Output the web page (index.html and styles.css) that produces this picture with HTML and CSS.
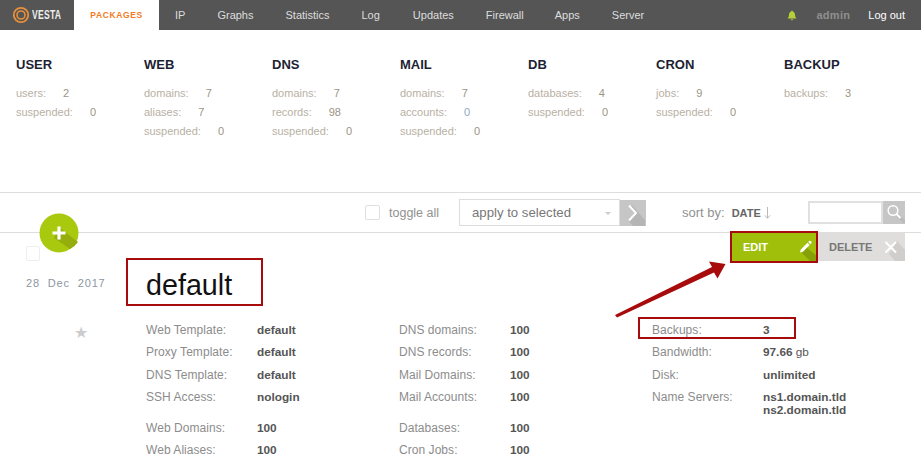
FILE: index.html
```html
<!DOCTYPE html>
<html lang="en">
<head>
<meta charset="utf-8">
<title>Packages</title>
<link rel="stylesheet" href="styles.css">
</head>
<body>
<nav class="nav">
  <div class="logo">
    <svg width="18" height="18" viewBox="0 0 18 18"><circle cx="9" cy="9" r="7.2" fill="none" stroke="#e8903a" stroke-width="1.8"/><circle cx="9" cy="9" r="4" fill="none" stroke="#e8903a" stroke-width="1.6"/></svg>
    <span class="logo-text">VESTA</span>
  </div>
  <a class="tab active">PACKAGES</a>
  <a class="item i-ip">IP</a>
  <a class="item i-graphs">Graphs</a>
  <a class="item i-stats">Statistics</a>
  <a class="item i-log">Log</a>
  <a class="item i-updates">Updates</a>
  <a class="item i-firewall">Firewall</a>
  <a class="item i-apps">Apps</a>
  <a class="item i-server">Server</a>
  <div class="nav-right">
    <svg class="bell" width="10" height="11" viewBox="0 0 10 11"><path d="M5 0.5c.5 0 .8.4.8.9C7.300 1.800 8 3 8 4.600c0 2 .5 3 1.500 3.900H.5C1.500 7.600 2 6.600 2 4.600 2 3 2.700 1.800 4.200 1.400c0-.5.3-.9.800-.9zM3.800 9.300h2.400C6.100 10 5.600 10.500 5 10.500S3.900 10 3.800 9.300z" fill="#b3cf3a"/></svg>
    <span class="user">admin</span>
    <a class="logout">Log out</a>
  </div>
</nav>

<section class="stats">
  <div class="stat">
    <h3>USER</h3>
    <p><span>users:</span><b>2</b></p>
    <p><span>suspended:</span><b>0</b></p>
  </div>
  <div class="stat">
    <h3>WEB</h3>
    <p><span>domains:</span><b>7</b></p>
    <p><span>aliases:</span><b>7</b></p>
    <p><span>suspended:</span><b>0</b></p>
  </div>
  <div class="stat">
    <h3>DNS</h3>
    <p><span>domains:</span><b>7</b></p>
    <p><span>records:</span><b>98</b></p>
    <p><span>suspended:</span><b>0</b></p>
  </div>
  <div class="stat">
    <h3>MAIL</h3>
    <p><span>domains:</span><b>7</b></p>
    <p><span>accounts:</span><b class="blue">0</b></p>
    <p><span>suspended:</span><b>0</b></p>
  </div>
  <div class="stat">
    <h3>DB</h3>
    <p><span>databases:</span><b>4</b></p>
    <p><span>suspended:</span><b>0</b></p>
  </div>
  <div class="stat">
    <h3>CRON</h3>
    <p><span>jobs:</span><b>9</b></p>
    <p><span>suspended:</span><b>0</b></p>
  </div>
  <div class="stat">
    <h3>BACKUP</h3>
    <p><span>backups:</span><b>3</b></p>
  </div>
</section>

<section class="toolbar">
  <span class="checkbox"></span>
  <span class="toggle">toggle all</span>
  <div class="select">apply to selected<i class="caret"></i></div>
  <div class="apply">
    <svg width="26" height="26" viewBox="0 0 26 26"><path d="M13 26 8 20 15 13 9 6h4l12 14v6z" fill="#b5b5b5"/><path d="M9 5.500 16 13 9 20.500" fill="none" stroke="#fff" stroke-width="2"/></svg>
  </div>
  <span class="sort">sort by:</span>
  <b class="sort-val">DATE</b>
  <svg class="sort-arrow" width="7" height="12" viewBox="0 0 7 12"><path d="M3.500 0v11M.8 8.300l2.700 3 2.700-3" fill="none" stroke="#bbb" stroke-width="1"/></svg>
  <div class="search"><div class="search-input"></div>
    <div class="search-btn"><svg width="22" height="22" viewBox="0 0 22 22"><path d="M13 15l7 7h2v-3l-7-7z" fill="#bbb"/><circle cx="10" cy="9.500" r="4.800" fill="none" stroke="#fff" stroke-width="1.500"/><path d="M13.500 13l4 4" stroke="#fff" stroke-width="2"/></svg></div>
  </div>
</section>

<a class="add">
  <svg width="40" height="40" viewBox="0 0 40 40"><circle cx="20" cy="20" r="19.500" fill="#a9c90f"/><path d="M21 15l18 14a19.500 19.500 0 0 1-8 7L15 25z" fill="#96ae0c"/><path d="M20 13.500v13M13.500 20h13" stroke="#fff" stroke-width="3.200"/></svg>
</a>

<section class="row">
  <div class="actions">
    <a class="btn edit">EDIT
      <svg width="24" height="28" viewBox="0 0 24 28"><path d="M8 20l4-6 12 10v4H16z" fill="#86a008"/><path d="M6 19.500l.8-3L13.500 9.800l2.200 2.200-6.700 6.700zM14.200 9l1-1a1 1 0 0 1 1.400 0l.8.800a1 1 0 0 1 0 1.400l-1 1z" fill="#fff"/></svg>
    </a>
    <a class="btn del">DELETE
      <svg width="26" height="28" viewBox="0 0 26 28"><path d="M10 21l8-13 8 9v11H16z" fill="#cfcecc"/><path d="M6.500 9 17 19.500M17 9 6.500 19.500" stroke="#fff" stroke-width="2"/></svg>
    </a>
  </div>
  <div class="body">
    <div class="side">
      <span class="small-check"></span>
      <div class="date"><span>28</span><span>Dec</span><span>2017</span></div>
      <div class="star">★</div>
    </div>
    <div class="content">
      <h1 class="name">default</h1>
      <div class="cols">
        <div class="col">
          <p><span>Web Template:</span><b>default</b></p>
          <p><span>Proxy Template:</span><b>default</b></p>
          <p><span>DNS Template:</span><b>default</b></p>
          <p class="gap"><span>SSH Access:</span><b>nologin</b></p>
          <p><span>Web Domains:</span><b>100</b></p>
          <p><span>Web Aliases:</span><b>100</b></p>
        </div>
        <div class="col">
          <p><span>DNS domains:</span><b>100</b></p>
          <p><span>DNS records:</span><b>100</b></p>
          <p><span>Mail Domains:</span><b>100</b></p>
          <p class="gap"><span>Mail Accounts:</span><b>100</b></p>
          <p><span>Databases:</span><b>100</b></p>
          <p><span>Cron Jobs:</span><b>100</b></p>
        </div>
        <div class="col">
          <p><span>Backups:</span><b>3</b></p>
          <p><span>Bandwidth:</span><b>97.66 <em>gb</em></b></p>
          <p><span>Disk:</span><b>unlimited</b></p>
          <p class="ns"><span>Name Servers:</span><b>ns1.domain.tld<br>ns2.domain.tld</b></p>
        </div>
      </div>
    </div>
  </div>
</section>

<div class="mark mark-edit"></div>
<div class="mark mark-name"></div>
<div class="mark mark-backups"></div>
<svg class="arrow" width="122" height="62" viewBox="0 0 122 62"><path d="M1 57 3 59.500 100 14.500 103.500 20.500 111.500 6 95 3.500 98 9z" fill="#a80b0b"/></svg>
</body>
</html>
```
FILE: styles.css
```css
* { box-sizing: border-box; }
html, body { margin: 0; padding: 0; }
body {
  width: 921px;
  height: 463px;
  overflow: hidden;
  background: #fff;
  position: relative;
  font-family: "Liberation Sans", Arial, sans-serif;
  font-size: 12px;
  color: #555;
}
p, h1, h3 { margin: 0; font-weight: normal; }

.nav {
  display: flex;
  align-items: center;
  height: 30px;
  background: #555;
  color: #ddd;
  font-size: 11px;
}
.logo { width: 74px; display: flex; align-items: center; padding-left: 12px; gap: 2px; }
.logo-text {
  color: #eee;
  font-weight: bold;
  font-size: 12px;
  display: inline-block;
  transform: scaleX(.72);
  transform-origin: left center;
  letter-spacing: .3px;
}
.tab {
  width: 85px;
  height: 30px;
  background: #fff;
  color: #f57a1f;
  font-weight: bold;
  font-size: 8.500px;
  letter-spacing: .6px;
  line-height: 30px;
  text-align: center;
}
.item { white-space: nowrap; }
.i-ip { margin-left: 16px; }
.i-graphs { margin-left: 32px; }
.i-stats { margin-left: 32px; }
.i-log { margin-left: 32px; }
.i-updates { margin-left: 33px; }
.i-firewall { margin-left: 32px; }
.i-apps { margin-left: 31px; }
.i-server { margin-left: 32px; }
.nav-right { margin-left: auto; display: flex; align-items: center; padding-right: 16px; }
.bell { margin-right: 19px; }
.user { color: #8f8f8f; font-weight: bold; font-size: 11px; letter-spacing: .3px; margin-right: 18px; }
.logout { color: #fff; }

.stats {
  display: grid;
  grid-template-columns: repeat(7, 128px);
  padding: 27px 0 0 16px;
  border-bottom: 1px solid #ddd;
  height: 163px;
}
.stat h3 { font-size: 13px; font-weight: bold; color: #1d1f33; line-height: 15px; margin-bottom: 12px; }
.stat p { height: 19px; line-height: 19px; color: #b8b0a4; font-size: 11px; white-space: nowrap; }
.stat b { font-weight: normal; margin-left: 17px; color: #9b9484; }
.stat b.blue { color: #8fa6c4; }

.toolbar {
  position: relative;
  height: 40px;
  border-bottom: 1px solid #ddd;
  display: flex;
  align-items: center;
  padding-left: 365px;
}
.checkbox { width: 15px; height: 15px; border: 1px solid #e0e0e0; border-radius: 2px; }
.toggle { margin-left: 9px; color: #90918f; font-size: 12.500px; width: 70px; }
.select {
  width: 161px;
  height: 27px;
  border: 1px solid #ddd;
  line-height: 25px;
  padding-left: 12px;
  color: #777;
  font-size: 13.200px;
  position: relative;
}
.caret {
  position: absolute;
  right: 8px;
  top: 12px;
  border: 3px solid transparent;
  border-top-color: #ccc;
}
.apply { width: 26px; height: 26px; background: #c6c6c6; margin-left: 0; display: flex; }
.sort { margin-left: 36px; color: #90918f; font-size: 13px; }
.sort-val { margin-left: 7px; font-size: 11px; color: #666; }
.sort-arrow { margin-left: 3px; }
.search { display: flex; margin-left: 37px; height: 23px; }
.search-input { width: 75px; height: 23px; border: 2px solid #e0e0e0; }
.search-btn { width: 22px; height: 23px; background: #c6c6c6; }

.add { position: absolute; left: 39px; top: 213px; width: 40px; height: 40px; display: block; z-index: 2; }
.add svg { display: block; }

.row { position: relative; height: 230px; }
.actions { display: flex; justify-content: flex-end; padding-right: 16px; height: 28px; }
.btn {
  display: flex;
  align-items: center;
  justify-content: space-between;
  height: 28px;
  font-weight: bold;
  font-size: 11px;
}
.edit { width: 88px; background: #9fbf0a; color: #fff; padding-left: 13px; padding-right: 0; }
.del { width: 87px; background: #dfdedc; color: #777; padding-left: 11px; }

.body { display: flex; }
.side { width: 146px; position: relative; }
.small-check {
  position: absolute; left: 26px; top: -15px;
  width: 14px; height: 15px;
  border: 1px solid #eee; border-radius: 2px;
}
.date {
  position: absolute; left: 26px; top: 16px;
  display: flex; gap: 8px;
  color: #8c96a3; font-size: 11px; letter-spacing: .8px;
}
.star { position: absolute; left: 74px; top: 62px; color: #ccc; font-size: 16px; line-height: 20px; font-family: "DejaVu Sans", sans-serif; }
.content { flex: 1; }
.name { font-size: 28.700px; color: #111; line-height: 36px; margin-top: 6px; height: 52px; }
.cols { display: flex; }
.col { width: 253px; }
.col p { display: flex; height: 22.400px; line-height: 22.400px; color: #8c8c8c; font-size: 12px; letter-spacing: .05px; }
.col p.gap { margin-bottom: 8.500px; }
.col p.ns { line-height: 13px; height: 30px; padding-top: 5px; }
.col span { width: 111px; flex: none; }
.col b { color: #555; font-weight: bold; font-size: 11.800px; letter-spacing: 0; }
.col em { font-style: normal; font-weight: normal; }

.mark { position: absolute; border: 2px solid #a80b0b; }
.mark-edit { left: 730px; top: 231px; width: 88px; height: 32px; }
.mark-name { left: 126px; top: 258px; width: 137px; height: 48px; }
.mark-backups { left: 638px; top: 317px; width: 158px; height: 22px; }
.arrow { position: absolute; left: 614px; top: 258px; }
```
